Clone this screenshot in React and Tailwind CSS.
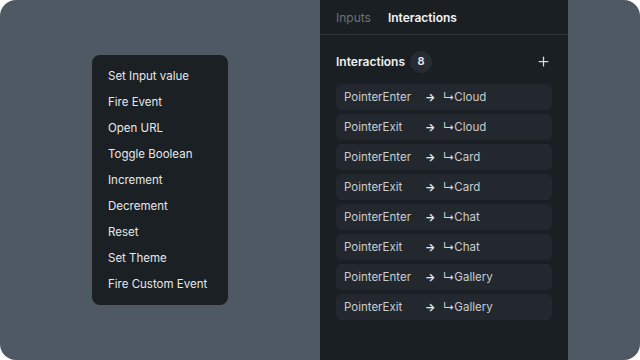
import { Plus } from "lucide-react";

const actions = [
  "Set Input value",
  "Fire Event",
  "Open URL",
  "Toggle Boolean",
  "Increment",
  "Decrement",
  "Reset",
  "Set Theme",
  "Fire Custom Event",
];

const interactions = [
  { event: "PointerEnter", target: "Cloud" },
  { event: "PointerExit", target: "Cloud" },
  { event: "PointerEnter", target: "Card" },
  { event: "PointerExit", target: "Card" },
  { event: "PointerEnter", target: "Chat" },
  { event: "PointerExit", target: "Chat" },
  { event: "PointerEnter", target: "Gallery" },
  { event: "PointerExit", target: "Gallery" },
];

const App = () => {
  return (
    <div className="w-[640px] h-[360px] bg-white font-['Inter',sans-serif]">
      <div className="flex h-full w-full rounded-2xl bg-[#4f5964] overflow-hidden">
        {/* action menu */}
        <div className="w-[320px] pl-[92px] pt-[55px]">
          <div className="w-[136px] rounded-lg bg-[#1a2024] pt-[9px] pb-[7px]">
            {actions.map((a) => (
              <div key={a} className="flex h-[26px] items-center px-4 text-[11.5px] text-[#e6e8ea]">
                {a}
              </div>
            ))}
          </div>
        </div>

        {/* side panel */}
        <div className="flex w-[248px] flex-col bg-[#1a1f23]">
          <div className="flex h-[35px] items-center gap-[17px] border-b border-[#2c3338] px-4 pt-[1px] text-[12px]">
            <span className="text-[#6b7379]">Inputs</span>
            <span className="font-semibold text-[#f2f3f4]">Interactions</span>
          </div>

          <div className="flex h-[49px] items-center px-4 pt-[4px]">
            <span className="text-[12px] font-semibold text-[#eef0f1]">Interactions</span>
            <span className="ml-[5px] flex h-[22px] w-[22px] items-center justify-center rounded-full bg-[#262c32] text-[11px] font-semibold text-[#e8eaec]">
              8
            </span>
            <Plus className="ml-auto mr-[1px] text-[#d8dbde]" size={15} strokeWidth={2} />
          </div>

          <div className="flex flex-col gap-[4px] px-4">
            {interactions.map((it, i) => (
              <div key={i} className="flex h-[26px] items-center rounded-md bg-[#22282e] px-2 pt-[1px] text-[11.5px] text-[#c9cdd1]">
                <span className="w-[81px]">{it.event}</span>
                <span className="w-[18px] text-[11px] font-bold text-[#e4e6e8]">→</span>
                <span className="text-[#d8dbde]">↳</span>
                <span>{it.target}</span>
              </div>
            ))}
          </div>
        </div>
        <div className="flex-1" />
      </div>
    </div>
  );
};

export default App;
